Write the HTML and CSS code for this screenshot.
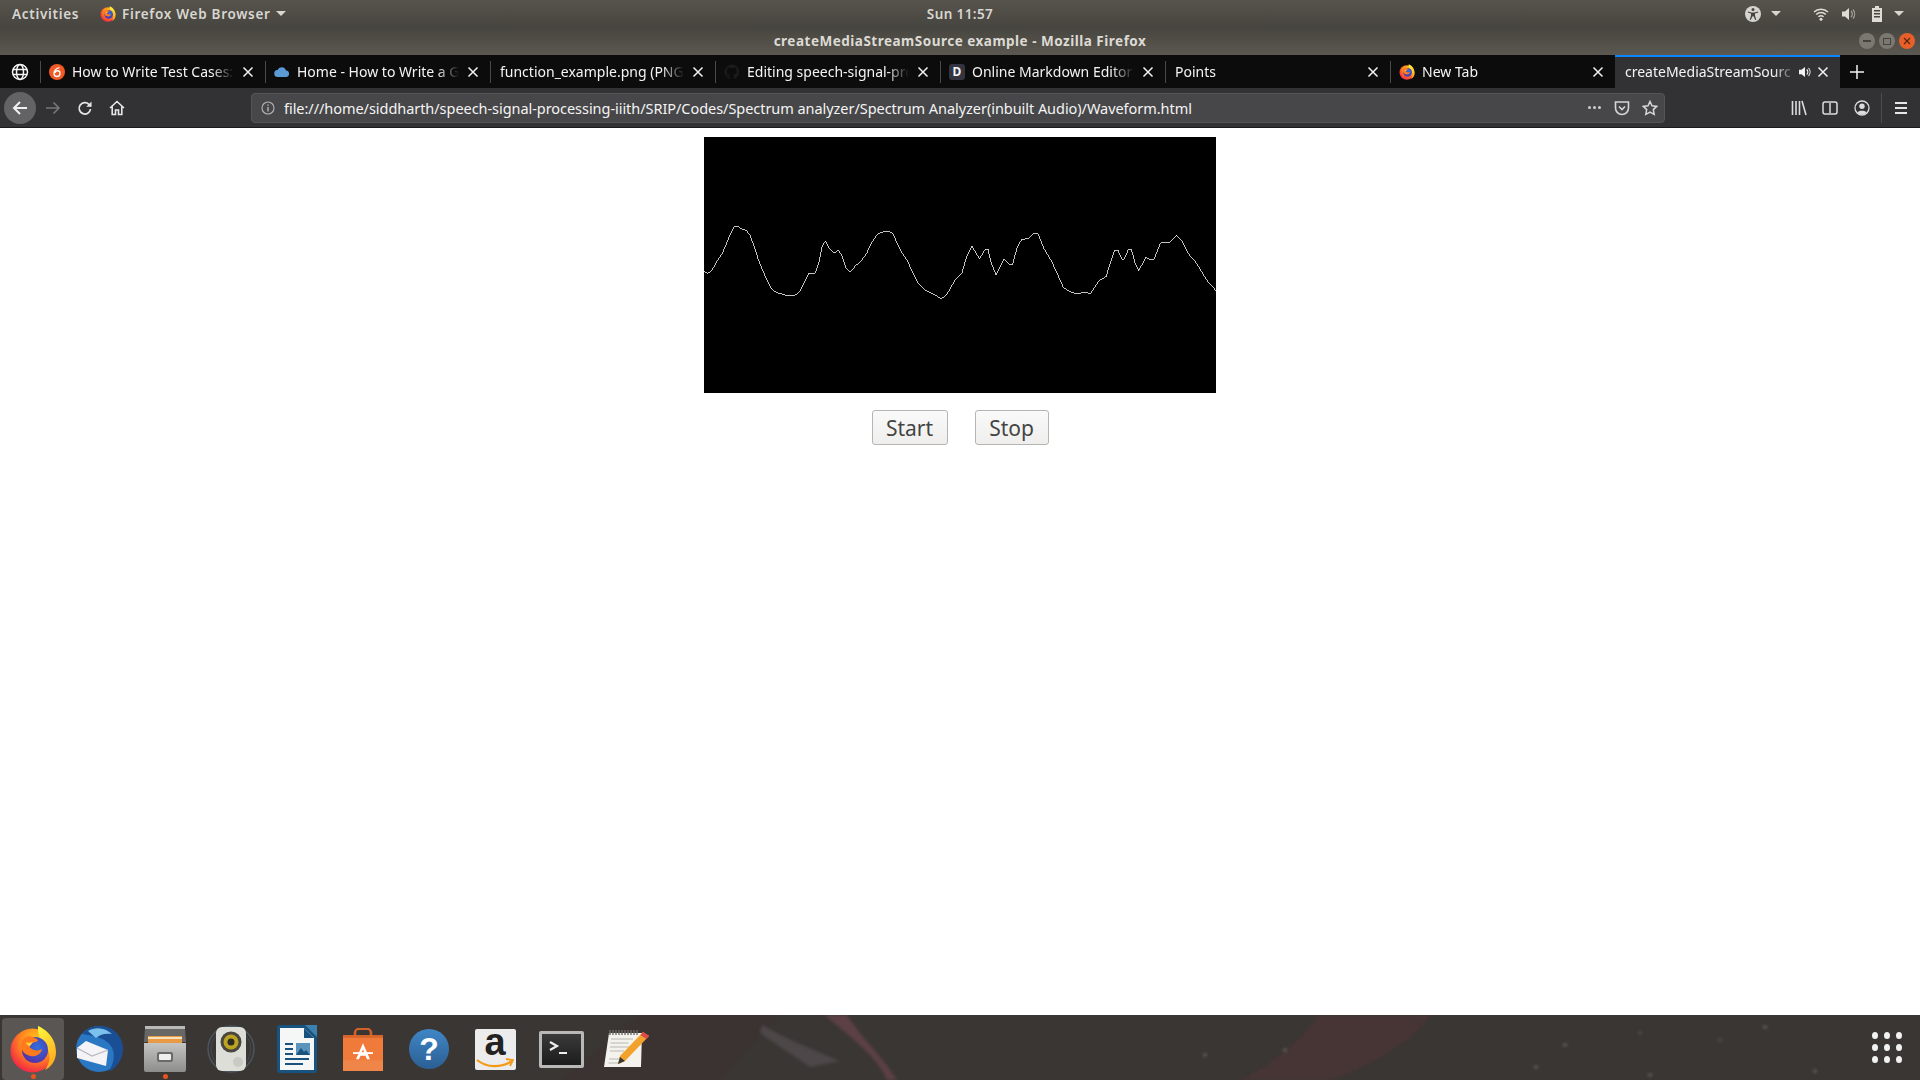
FILE: index.html
```html
<!DOCTYPE html>
<html lang="en">
<head>
<meta charset="UTF-8">
<title>createMediaStreamSource example - Mozilla Firefox</title>
<link rel="stylesheet" href="styles.css">
</head>
<body>

<!-- shared icons -->
<svg class="defs" width="0" height="0">
  <defs>
    <radialGradient id="foxBody" cx="0.62" cy="0.3" r="0.85">
      <stop offset="0" stop-color="#ffcf1f"/>
      <stop offset="0.45" stop-color="#ff8a1e"/>
      <stop offset="0.8" stop-color="#f5333f"/>
      <stop offset="1" stop-color="#d1156b"/>
    </radialGradient>
    <linearGradient id="foxFlame" x1="0.3" y1="0" x2="0.7" y2="1">
      <stop offset="0" stop-color="#fff23a"/>
      <stop offset="1" stop-color="#ffa51d"/>
    </linearGradient>
    <radialGradient id="foxGlobe" cx="0.6" cy="0.4" r="0.7">
      <stop offset="0" stop-color="#2f6fe0"/>
      <stop offset="1" stop-color="#5a2a9e"/>
    </radialGradient>
    <symbol id="firefox" viewBox="0 0 48 48">
      <circle cx="23.500" cy="25.500" r="22" fill="url(#foxBody)"/>
      <path d="M29 1c7 3 18 11 18 26 0 9-5 15-11 18 5-7 6-15 2-22-3-5-10-10-9-22z" fill="url(#foxFlame)"/>
      <circle cx="26" cy="25" r="13" fill="url(#foxGlobe)"/>
      <path d="M20 11c5 1 9 3 9 5-3 2-7 1-8 4-1 2 1 4 4 5 3 1 6 0 8-1-1 5-6 8-11 7-6-1-10-5-10-11 0-4 3-8 8-9z" fill="#ff7a1c"/>
      <path d="M17 17c1 1 5 1 7 0l-3 4c-2 0-4-2-4-4z" fill="#ffd23a"/>
    </symbol>
    <symbol id="close" viewBox="0 0 12 12">
      <path d="M1.500 1.500l9 9M10.500 1.500l-9 9" stroke="#f2f2f2" stroke-width="1.500" fill="none"/>
    </symbol>
  </defs>
</svg>

<header class="topbar">
  <div class="topbar-left">
    <span class="activities">Activities</span>
    <span class="app-menu">
      <svg class="app-icon" width="16" height="16"><use href="#firefox"/></svg>
      Firefox Web Browser
      <i class="caret"></i>
    </span>
  </div>
  <div class="clock">Sun 11:57</div>
  <div class="tray">
    <svg class="tray-a11y" width="16" height="16" viewBox="0 0 16 16">
      <circle cx="8" cy="8" r="8" fill="#d6d4cf"/>
      <circle cx="8" cy="3.600" r="1.500" fill="#45433e"/>
      <path d="M3 5.600l3.600.8h2.800l3.600-.8.3 1-3.300 1v2.200l1.300 4-1 .3L8.500 10.300h-1L5.700 14.100l-1-.3 1.300-4V7.600l-3.300-1z" fill="#45433e"/>
    </svg>
    <i class="caret tray-caret1"></i>
    <svg class="tray-wifi" width="16" height="14" viewBox="0 0 16 14">
      <path d="M1 5a10 10 0 0 1 14 0M3.200 7.500a7 7 0 0 1 9.600 0M5.400 9.800a4 4 0 0 1 5.200 0" stroke="#dedcd7" stroke-width="1.500" fill="none"/>
      <circle cx="8" cy="12.300" r="1.500" fill="#dedcd7"/>
    </svg>
    <svg class="tray-vol" width="16" height="14" viewBox="0 0 16 14">
      <path d="M1 4.500h3l4-3.500v12l-4-3.500H1z" fill="#dedcd7"/>
      <path d="M10 4a4 4 0 0 1 0 6M12 2.500a7 7 0 0 1 0 9" stroke="#a5a39e" stroke-width="1.200" fill="none"/>
    </svg>
    <svg class="tray-batt" width="12" height="16" viewBox="0 0 12 16">
      <path d="M4 0h4v2h3v14H1V2h3z" fill="#dedcd7"/>
      <path d="M3 4h6v1.500H3zM3 7h6v1.500H3zM3 10h6v1.500H3z" fill="#45433e"/>
    </svg>
    <i class="caret tray-caret2"></i>
  </div>
</header>

<header class="titlebar">
  <div></div>
  <div class="window-title">createMediaStreamSource example - Mozilla Firefox</div>
  <div class="window-btns">
    <span class="win-btn"><i class="win-min"></i></span>
    <span class="win-btn"><i class="win-max"></i></span>
    <span class="win-btn win-close">
      <svg width="8" height="8" viewBox="0 0 8 8"><path d="M1 1l6 6M7 1L1 7" stroke="#5a2410" stroke-width="1.200"/></svg>
    </span>
  </div>
</header>

<nav class="tabbar">
  <div class="pinned">
    <svg width="18" height="18" viewBox="0 0 18 18" fill="none" stroke="#f4f4f4" stroke-width="1.500">
      <circle cx="9" cy="9" r="7.500"/>
      <ellipse cx="9" cy="9" rx="3.500" ry="7.500"/>
      <path d="M2 6.500h14M2 11.500h14"/>
    </svg>
  </div>
  <div class="tab">
    <svg class="favicon" width="16" height="16" viewBox="0 0 16 16">
      <circle cx="8" cy="8" r="8" fill="#f15a24"/>
      <path d="M10.500 3.500C7 4.500 5 7 5 9.500a3 3 0 0 0 6 0 2.500 2.500 0 0 0-5-.5" stroke="#fff" stroke-width="1.300" fill="none"/>
    </svg>
    <span class="tab-title">How to Write Test Cases:</span>
    <svg class="tab-close" width="12" height="12"><use href="#close"/></svg>
  </div>
  <div class="tab">
    <svg class="favicon" width="16" height="16" viewBox="0 0 16 16">
      <path d="M4 13a3.500 3.500 0 0 1-.5-7A4.500 4.500 0 0 1 12 6.500 3.300 3.300 0 0 1 12.500 13z" fill="#5b9bd5"/>
    </svg>
    <span class="tab-title">Home - How to Write a G</span>
    <svg class="tab-close" width="12" height="12"><use href="#close"/></svg>
  </div>
  <div class="tab tab-plain">
    <span class="tab-title">function_example.png (PNG</span>
    <svg class="tab-close" width="12" height="12"><use href="#close"/></svg>
  </div>
  <div class="tab">
    <svg class="favicon" width="16" height="16" viewBox="0 0 16 16">
      <path d="M8 .5a7.500 7.500 0 0 0-2.400 14.600v-2.500c-2 .4-2.500-1-2.500-1l-1-1.500 1.500.3 1 1.200c.6.500 1 .3 1.200.1 0-.6.400-1 .4-1-2-.2-3.500-1-3.500-3.500 0-.8.300-1.500.8-2-.1-.3-.3-1 .1-2 0 0 .7-.2 2.200.8a7 7 0 0 1 4 0c1.500-1 2.200-.8 2.200-.8.400 1 .2 1.700.1 2 .5.500.8 1.200.8 2 0 2.500-1.500 3.300-3.500 3.500.3.300.5.700.5 1.400v3A7.500 7.500 0 0 0 8 .5z" fill="#1c1c1e"/>
    </svg>
    <span class="tab-title">Editing speech-signal-pro</span>
    <svg class="tab-close" width="12" height="12"><use href="#close"/></svg>
  </div>
  <div class="tab">
    <span class="favicon fav-d">D</span>
    <span class="tab-title">Online Markdown Editor</span>
    <svg class="tab-close" width="12" height="12"><use href="#close"/></svg>
  </div>
  <div class="tab tab-plain">
    <span class="tab-title">Points</span>
    <svg class="tab-close" width="12" height="12"><use href="#close"/></svg>
  </div>
  <div class="tab">
    <svg class="favicon" width="16" height="16"><use href="#firefox"/></svg>
    <span class="tab-title">New Tab</span>
    <svg class="tab-close" width="12" height="12"><use href="#close"/></svg>
  </div>
  <div class="tab tab-active">
    <span class="tab-title">createMediaStreamSourc</span>
    <svg class="tab-sound" width="14" height="14" viewBox="0 0 14 14">
      <path d="M1 4.800h2.500L7 2v10L3.500 9.200H1z" fill="#f2f2f2"/>
      <path d="M8.800 4.500a3.500 3.500 0 0 1 0 5M10.500 3a6 6 0 0 1 0 8" stroke="#f2f2f2" stroke-width="1.100" fill="none"/>
    </svg>
    <svg class="tab-close" width="12" height="12"><use href="#close"/></svg>
  </div>
  <svg class="new-tab" width="14" height="14" viewBox="0 0 14 14">
    <path d="M7 0v14M0 7h14" stroke="#f2f2f2" stroke-width="1.500"/>
  </svg>
</nav>

<nav class="toolbar">
  <span class="back-btn">
    <svg width="18" height="18" viewBox="0 0 18 18" fill="none" stroke="#f0f0f0" stroke-width="2">
      <path d="M16 9H3M9 3L3 9l6 6"/>
    </svg>
  </span>
  <svg class="forward" width="16" height="16" viewBox="0 0 16 16" fill="none" stroke="#77777a" stroke-width="1.600">
    <path d="M1 8h13M8.500 2.500L14 8l-5.500 5.500"/>
  </svg>
  <svg class="reload" width="16" height="16" viewBox="0 0 16 16" fill="none" stroke="#e6e6e6" stroke-width="1.700">
    <path d="M13.500 9a5.700 5.700 0 1 1-1.600-4.700L14 6.200"/>
    <path d="M14.500 1.500v5.200H9.300" fill="#e6e6e6" stroke="none"/>
  </svg>
  <svg class="home" width="16" height="16" viewBox="0 0 16 16" fill="none" stroke="#e6e6e6" stroke-width="1.600">
    <path d="M1 8l7-6.500L15 8M3.200 6.500V14.500h3.300v-4.500h3v4.500h3.300V6.500"/>
  </svg>
  <div class="urlbar">
    <svg class="url-info" width="14" height="14" viewBox="0 0 14 14" fill="none" stroke="#b4b4b6" stroke-width="1.100">
      <circle cx="7" cy="7" r="6"/>
      <path d="M7 6v4.500M7 3.500v1.300" stroke-width="1.400"/>
    </svg>
    <span class="url-text">file:///home/siddharth/speech-signal-processing-iiith/SRIP/Codes/Spectrum analyzer/Spectrum Analyzer(inbuilt Audio)/Waveform.html</span>
    <span class="url-dots"><i></i><i></i><i></i></span>
    <svg class="url-pocket" width="16" height="16" viewBox="0 0 16 16" fill="none" stroke="#d6d6d8" stroke-width="1.600">
      <path d="M1.500 2h13v6a6.500 6.500 0 0 1-13 0z"/>
      <path d="M5 6.500l3 3 3-3"/>
    </svg>
    <svg class="url-star" width="16" height="16" viewBox="0 0 16 16" fill="none" stroke="#d6d6d8" stroke-width="1.500">
      <path d="M8 1.500l2 4.300 4.700.6-3.400 3.200.9 4.700L8 12l-4.200 2.300.9-4.700L1.300 6.400 6 5.800z"/>
    </svg>
  </div>
  <svg class="tool-lib" width="16" height="16" viewBox="0 0 16 16" stroke="#dcdcde" stroke-width="1.600" fill="none">
    <path d="M1.500 1v14M5 1v14M8.500 1v14M11 1l4 14"/>
  </svg>
  <svg class="tool-side" width="16" height="16" viewBox="0 0 16 16" fill="none" stroke="#dcdcde" stroke-width="1.500">
    <rect x="1" y="2" width="14" height="12" rx="2"/>
    <path d="M8 3v10" />
  </svg>
  <svg class="tool-acct" width="16" height="16" viewBox="0 0 16 16" fill="none" stroke="#dcdcde" stroke-width="1.300">
    <circle cx="8" cy="8" r="7"/>
    <circle cx="8" cy="6.300" r="2.700" fill="#dcdcde" stroke="none"/>
    <path d="M3.300 12.500c1-2.200 8.400-2.200 9.400 0-1.200 1.500-3 2-4.700 2s-3.500-.5-4.700-2z" fill="#dcdcde" stroke="none"/>
  </svg>
  <i class="tool-sep"></i>
  <svg class="tool-menu" width="14" height="14" viewBox="0 0 14 14" stroke="#e6e6e6" stroke-width="1.800">
    <path d="M1 2h12M1 7h12M1 12h12"/>
  </svg>
</nav>

<main class="page">
  <div class="scope">
    <svg width="512" height="256" viewBox="12 21 1536 768" shape-rendering="crispEdges">
      <polyline fill="none" stroke="#fff" stroke-width="2.300" points="12,424 24,430 36,420 50,396 66,372 80,340 92,310 102,290 112,289 128,298 140,302 150,316 162,348 176,392 196,440 214,476 230,488 256,495 286,495 300,484 312,458 326,430 346,429 356,400 366,350 376,334 390,358 402,370 414,361 424,372 438,414 450,427 466,408 484,392 500,370 516,336 530,316 542,307 566,303 578,310 590,336 604,366 622,392 640,432 656,462 672,478 696,490 724,506 740,494 764,452 786,428 800,380 816,349 838,386 856,358 864,358 874,400 888,434 898,416 912,388 930,404 938,402 952,350 964,330 986,324 1002,310 1014,312 1032,356 1056,396 1072,432 1090,472 1104,482 1130,492 1150,487 1172,490 1190,462 1200,450 1218,440 1234,390 1244,361 1254,361 1266,388 1272,388 1286,357 1294,358 1306,402 1316,422 1326,404 1338,382 1350,388 1362,388 1380,342 1386,338 1408,337 1430,316 1444,330 1466,372 1490,400 1520,450 1548,482"/>
    </svg>
  </div>
  <div class="controls">
    <button class="start">Start</button>
    <button class="stop">Stop</button>
  </div>
</main>

<footer class="dock">
  <svg class="wallpaper" width="1920" height="65" viewBox="0 0 1920 65">
    <defs>
      <filter id="soft"><feGaussianBlur stdDeviation="1.500"/></filter>
    </defs>
    <rect width="1920" height="65" fill="#3a3633"/>
    <path d="M640 0h140l-60 65H560z" fill="#3a3230" filter="url(#soft)"/>
    <path d="M825 0l22 0c14 22 34 40 50 65h-10c-8-22-38-44-62-65z" fill="#5b4044" filter="url(#soft)"/>
    <path d="M760 18l50 34 30-6c-20-8-54-22-78-36z" fill="#4d4748" filter="url(#soft)"/>
    <path d="M1320 0h110c-20 30-60 50-100 65h-90c40-20 60-40 80-65z" fill="#463436" filter="url(#soft)"/>
    <g fill="#5b5a57" filter="url(#soft)">
      <circle cx="1205" cy="40" r="2"/><circle cx="1285" cy="35" r="2"/>
      <circle cx="1565" cy="30" r="2"/><circle cx="1536" cy="52" r="2"/>
      <circle cx="1650" cy="60" r="2"/><circle cx="1765" cy="12" r="2"/>
      <circle cx="1815" cy="56" r="2"/><circle cx="1640" cy="18" r="1.500"/>
      <circle cx="1720" cy="25" r="1.500"/>
    </g>
  </svg>

  <div class="dock-item dock-active">
    <svg width="48" height="48"><use href="#firefox"/></svg>
    <i class="running"></i>
  </div>

  <div class="dock-item">
    <svg width="50" height="50" viewBox="0 0 50 50">
      <circle cx="25" cy="25" r="23" fill="#2a77c4"/>
      <path d="M8 10c6-8 18-10 28-6 8 4 13 12 13 21 0 10-6 19-15 23 6-8 8-18 3-26C32 14 20 12 8 10z" fill="#1a4f96"/>
      <path d="M14 7c8-5 18-3 24 3-6-1-12 0-16 4z" fill="#7cc0ec"/>
      <path d="M3 24l9-7 22 9-2 16-29-8z" fill="#f4f4f6"/>
      <path d="M3 24l15 8 16-6" fill="none" stroke="#b8b8c2" stroke-width="1.300"/>
    </svg>
  </div>

  <div class="dock-item">
    <svg width="44" height="46" viewBox="0 0 44 46">
      <defs>
        <linearGradient id="cabinet" x1="0" y1="0" x2="0" y2="1">
          <stop offset="0" stop-color="#c4c4c2"/>
          <stop offset="1" stop-color="#8d8d8b"/>
        </linearGradient>
      </defs>
      <path d="M2 2h40l1 14H1z" fill="#676765"/>
      <path d="M2 0h40v3H2z" fill="#b9b9b7"/>
      <path d="M5 10h34v8H5z" fill="#e99a45"/>
      <path d="M5 11h34v2H5z" fill="#f7e1bb"/>
      <path d="M1 17h42v27a2 2 0 0 1-2 2H3a2 2 0 0 1-2-2z" fill="url(#cabinet)"/>
      <rect x="14" y="26" width="16" height="10" rx="2" fill="#6a6a68"/>
      <rect x="16" y="28" width="12" height="6" rx="1" fill="#efefed"/>
    </svg>
    <i class="running"></i>
  </div>

  <div class="dock-item">
    <svg width="48" height="48" viewBox="0 0 48 48">
      <circle cx="24" cy="24" r="23" fill="none" stroke="#4a5560" stroke-width="1.500"/>
      <circle cx="24" cy="24" r="20" fill="none" stroke="#454b52"/>
      <rect x="9" y="2" width="30" height="44" rx="6" fill="#ddded8"/>
      <circle cx="24" cy="17" r="10.500" fill="#4a473e"/>
      <circle cx="24" cy="17" r="7.500" fill="#bba421"/>
      <circle cx="24" cy="17" r="3.500" fill="#2d2b22"/>
      <circle cx="31" cy="37" r="5" fill="#c9cac4"/>
    </svg>
  </div>

  <div class="dock-item">
    <svg width="40" height="48" viewBox="0 0 40 48">
      <path d="M0 3a3 3 0 0 1 3-3h37v45a3 3 0 0 1-3 3H3a3 3 0 0 1-3-3z" fill="#18527e"/>
      <path d="M28 0h12v12z" fill="#3b80ae"/>
      <path d="M3 3h24l10 10v32H3z" fill="#f5f7f6"/>
      <path d="M27 3v10h10z" fill="#18527e"/>
      <path d="M8 18h8v2H8zM8 23h8v2H8zM8 28h8v2H8zM8 33h24v2H8zM8 38h18v2H8z" fill="#18527e"/>
      <rect x="19" y="18" width="14" height="12" fill="#5a94bd"/>
      <path d="M19 30l5-7 3 4 2-2 4 5z" fill="#18527e"/>
    </svg>
  </div>

  <div class="dock-item">
    <svg width="42" height="43" viewBox="0 0 42 48" preserveAspectRatio="none">
      <path d="M13 10V5a4 4 0 0 1 4-4h8a4 4 0 0 1 4 4v5" fill="none" stroke="#d2622a" stroke-width="2.500"/>
      <path d="M1 8h40v40H1z" fill="#ef7a3a"/>
      <path d="M1 8h40v3H1z" fill="#d9642a"/>
      <path d="M1 36h40v12H1z" fill="#f0854a"/>
      <path d="M21 17l-7 18h3l1.500-4h5l1.500 4h3l-7-18zM19.500 28l1.500-4 1.500 4z" fill="#fff"/>
      <path d="M11 27h20v2H11z" fill="#fff"/>
    </svg>
  </div>

  <div class="dock-item">
    <svg width="40" height="40" viewBox="0 0 40 40">
      <defs>
        <linearGradient id="helpBall" x1="0" y1="0" x2="0" y2="1">
          <stop offset="0" stop-color="#3f86c6"/>
          <stop offset="1" stop-color="#2b5f94"/>
        </linearGradient>
      </defs>
      <circle cx="20" cy="20" r="20" fill="url(#helpBall)"/>
      <text class="help-mark" x="20" y="31" text-anchor="middle">?</text>
    </svg>
  </div>

  <div class="dock-item">
    <div class="amazon">
      <span class="amazon-a">a</span>
      <svg width="38" height="12" viewBox="0 0 38 12" fill="none" stroke="#f39a16" stroke-width="2.200">
        <path d="M1 2c10 8 24 8 35 1"/>
        <path d="M30 1l7 1-3 6" stroke-width="1.800"/>
      </svg>
    </div>
  </div>

  <div class="dock-item">
    <div class="terminal">
      <svg width="38" height="30" viewBox="0 0 38 30" fill="none" stroke="#eeeeee">
        <path d="M8 8l7 4-7 4" stroke-width="2.200"/>
        <path d="M17 19h8" stroke-width="2"/>
      </svg>
    </div>
  </div>

  <div class="dock-item">
    <svg width="46" height="38" viewBox="0 0 46 38">
      <path d="M5 3h33l-1 34H0z" fill="#f3f2ec"/>
      <path d="M6 0v5M9 0v5M12 0v5M15 0v5M18 0v5M21 0v5M24 0v5M27 0v5M30 0v5M33 0v5" stroke="#6b6b68" stroke-width="1.400"/>
      <path d="M7 9h22M6.500 13h18M6 17h20M6 21h14M5 29h10M4.500 33h12" stroke="#b9b8b2" stroke-width="1.200"/>
      <path d="M39 2l6 4-24 25-7 3 2-8z" fill="#f2a12c"/>
      <path d="M39 2l6 4-2.500 3-6-4z" fill="#d94b4b"/>
      <path d="M16 27l5 4-7 3z" fill="#3a3633"/>
    </svg>
  </div>

  <div class="app-grid">
    <i></i><i></i><i></i><i></i><i></i><i></i><i></i><i></i><i></i>
  </div>
</footer>

</body>
</html>
```

FILE: styles.css
```css
html, body {
  height: 100%;
}

body {
  margin: 0;
  display: flex;
  flex-direction: column;
  overflow: hidden;
  background: #fff;
  font-family: "Noto Sans", "Open Sans", sans-serif;
}

.defs {
  position: absolute;
}

svg {
  display: block;
  flex: none;
}

/* gnome top bar */
.topbar {
  height: 27px;
  display: grid;
  grid-template-columns: 1fr auto 1fr;
  align-items: center;
  background: linear-gradient(#57544d, #47453f);
  color: #d8d6d0;
  font-size: 13.5px;
  font-weight: 600;
}

.topbar-left {
  display: flex;
  align-items: center;
  padding-left: 12px;
}

.activities {
  width: 88px;
  letter-spacing: 0.7px;
}

.app-menu {
  display: flex;
  align-items: center;
  letter-spacing: 0.7px;
}

.clock {
  letter-spacing: 0.4px;
}

.app-icon {
  margin-right: 6px;
}

.caret {
  display: block;
  width: 0;
  height: 0;
  border-left: 5px solid transparent;
  border-right: 5px solid transparent;
  border-top: 5px solid #d8d6d0;
  margin-left: 5px;
}

.tray {
  display: flex;
  align-items: center;
  justify-content: flex-end;
}

.tray-a11y { margin-right: 5px; }
.tray-caret1 { margin-right: 32px; }
.tray-wifi { margin-right: 12px; }
.tray-vol { margin-right: 14px; }
.tray-batt { margin-right: 6px; }
.tray-caret2 { margin-right: 16px; }

/* window title */
.titlebar {
  height: 28px;
  display: grid;
  grid-template-columns: 1fr auto 1fr;
  align-items: center;
  background: linear-gradient(#47453f, #5a5850);
  color: #dcdad4;
  font-size: 13.5px;
  font-weight: 700;
}

.window-title {
  letter-spacing: 0.5px;
}

.window-btns {
  display: flex;
  justify-content: flex-end;
  gap: 4px;
  padding-right: 5px;
}

.win-btn {
  width: 16px;
  height: 16px;
  border-radius: 50%;
  background: #7a7870;
  display: flex;
  align-items: center;
  justify-content: center;
}

.win-min {
  width: 8px;
  height: 1.500px;
  background: #45433e;
}

.win-max {
  width: 6px;
  height: 5px;
  border: 1px solid #45433e;
}

.win-close {
  background: #e95f2a;
}

/* tabs */
.tabbar {
  height: 33px;
  display: flex;
  align-items: stretch;
  background: #0c0c0d;
  color: #f4f4f4;
  font-size: 14px;
}

.pinned {
  width: 40px;
  box-sizing: border-box;
  display: flex;
  align-items: center;
  justify-content: center;
}

.tab {
  position: relative;
  width: 225px;
  display: flex;
  align-items: center;
  padding: 0 11px 0 9px;
  box-sizing: border-box;
  white-space: nowrap;
}

.tab::before {
  content: "";
  position: absolute;
  left: 0;
  top: 6px;
  bottom: 5px;
  width: 1px;
  background: #4a4a4c;
}

.tab-plain {
  padding-left: 10px;
}

.favicon {
  margin-right: 7px;
  flex: none;
}

.fav-d {
  width: 16px;
  height: 16px;
  border-radius: 3px;
  background: #33343f;
  color: #f4f4f4;
  font-size: 12px;
  font-weight: 700;
  line-height: 16px;
  text-align: center;
}

.tab-title {
  flex: 1;
  min-width: 0;
  overflow: hidden;
  -webkit-mask-image: linear-gradient(to right, #000 calc(100% - 22px), transparent);
  mask-image: linear-gradient(to right, #000 calc(100% - 22px), transparent);
}

.tab-close {
  margin-left: 8px;
}

.tab-active {
  background: #323234;
  border-top: 2px solid #0a84ff;
  padding: 0 11px 2px 10px;
}

.tab-active::before {
  display: none;
}

.tab-sound {
  margin-left: 2px;
}

.tab-active .tab-close {
  margin-left: 5px;
}

.new-tab {
  align-self: center;
  margin-left: 10px;
}

/* nav toolbar */
.toolbar {
  height: 40px;
  display: flex;
  align-items: center;
  background: #323234;
  border-bottom: 1px solid #1a1a1c;
  box-sizing: border-box;
}

.back-btn {
  width: 32px;
  height: 32px;
  margin-left: 4px;
  border-radius: 50%;
  background: #636366;
  display: flex;
  align-items: center;
  justify-content: center;
}

.forward { margin-left: 9px; }
.reload { margin-left: 16px; }
.home { margin-left: 16px; }

.urlbar {
  margin-left: 126px;
  width: 1414px;
  height: 30px;
  box-sizing: border-box;
  display: flex;
  align-items: center;
  background: #474749;
  border: 1px solid #555557;
  border-radius: 4px;
  padding-left: 9px;
}

.url-text {
  margin-left: 9px;
  flex: 1;
  color: #f4f4f4;
  font-size: 14.5px;
  letter-spacing: -0.05px;
  white-space: nowrap;
}

.url-dots {
  display: flex;
  gap: 2px;
  margin-right: 13px;
}

.url-dots i {
  width: 3px;
  height: 3px;
  border-radius: 50%;
  background: #cfcfd1;
}

.url-pocket { margin-right: 12px; }
.url-star { margin-right: 6px; }

.tool-lib { margin-left: 126px; }
.tool-side { margin-left: 15px; }
.tool-acct { margin-left: 16px; }

.tool-sep {
  width: 1px;
  height: 30px;
  margin-left: 11px;
  background: #4c4c4e;
}

.tool-menu {
  margin-left: 12px;
}

/* page content */
.page {
  flex: 1;
  display: flex;
  flex-direction: column;
  align-items: center;
  padding-top: 9px;
  background: #fff;
}

.scope {
  width: 512px;
  height: 256px;
  background: #000;
}

.controls {
  display: flex;
  gap: 27px;
  margin-top: 17px;
}

.controls button {
  height: 35px;
  padding: 0;
  border: 1px solid #b5b5b3;
  border-radius: 3px;
  background: linear-gradient(#fafafa, #efeeed);
  color: #444;
  font-family: "Noto Sans", sans-serif;
  font-size: 21px;
  line-height: 30px;
}

.start { width: 76px; }
.stop { width: 74px; }

/* ubuntu dock */
.dock {
  position: relative;
  height: 65px;
  display: flex;
  align-items: center;
  background: #3a3633;
}

.wallpaper {
  position: absolute;
  left: 0;
  top: 0;
}

.dock-item {
  position: relative;
  width: 66px;
  height: 62px;
  margin-top: 3px;
  display: flex;
  align-items: center;
  justify-content: center;
  border-radius: 4px;
}

.dock-active {
  background: rgba(255, 255, 255, 0.16);
  width: 62px;
  margin-left: 2px;
  margin-right: 2px;
}

.running {
  position: absolute;
  left: 50%;
  bottom: 1px;
  width: 5px;
  height: 5px;
  margin-left: -2.500px;
  border-radius: 50%;
  background: #e95420;
}

.help-mark {
  fill: #fff;
  font-family: "Liberation Sans", sans-serif;
  font-size: 32px;
  font-weight: 700;
}

.amazon {
  width: 41px;
  height: 41px;
  box-sizing: border-box;
  display: flex;
  flex-direction: column;
  align-items: center;
  background: #ececec;
  border-radius: 2px;
}

.amazon-a {
  height: 30px;
  color: #222;
  font-family: "Liberation Sans", sans-serif;
  font-size: 38px;
  font-weight: 700;
  line-height: 26px;
}

.terminal {
  width: 45px;
  height: 37px;
  box-sizing: border-box;
  border: 3px solid #b8b8b6;
  border-radius: 2px;
  background: linear-gradient(#3a3a3a, #1c1c1c);
}

.app-grid {
  position: relative;
  margin-left: auto;
  margin-right: 18px;
  display: grid;
  grid-template-columns: repeat(3, 6px);
  grid-auto-rows: 7px;
  column-gap: 6px;
  row-gap: 5px;
}

.app-grid i {
  border-radius: 50%;
  background: #f2f2f2;
}
```
